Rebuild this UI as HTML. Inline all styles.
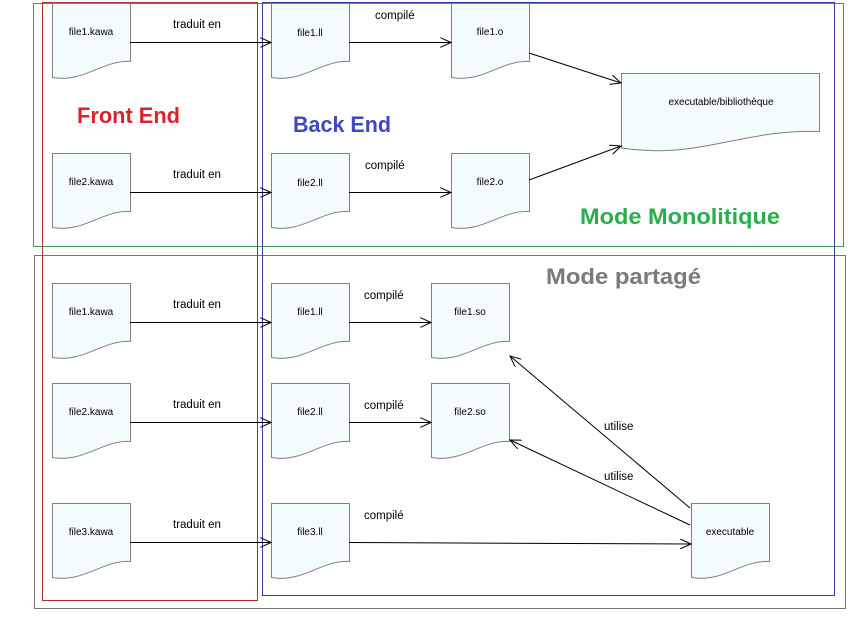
<!DOCTYPE html>
<html><head><meta charset="utf-8"><style>
html,body{margin:0;padding:0;background:#fff;width:860px;height:625px;overflow:hidden}
svg{display:block}
text{font-family:"Liberation Sans",sans-serif}
.d{fill:#f4fbfd;stroke:#7f7f7f;stroke-width:1}
.t{font-size:10px;fill:#000;text-anchor:middle}
.l{font-size:11.5px;fill:#000}
.a{stroke:#000;stroke-width:1;fill:none}
.big{font-size:22px;font-weight:bold}
</style></head><body>
<svg width="860" height="625" viewBox="0 0 860 625">
<defs>
<g id="doc"><path class="d" d="M0.5,0.5 H78.5 V58.5 C50,57 32,80 0.5,74.5 Z"/></g>
<marker id="ar" markerWidth="12" markerHeight="10" refX="11" refY="5" orient="auto" markerUnits="userSpaceOnUse"><path d="M0,0 L11,5 L0,10" fill="none" stroke="#000" stroke-width="1"/></marker>
</defs>
<rect x="33.5" y="3.5" width="810" height="243" fill="none" stroke="#3a9a50"/>
<rect x="34.5" y="255.5" width="811" height="353" fill="none" stroke="#777"/>
<rect x="42.5" y="2.5" width="215" height="598" fill="none" stroke="#b03030"/>
<rect x="262.5" y="2.5" width="572" height="593" fill="none" stroke="#3a3a9a"/>

<text x="77" y="123" class="big" fill="#d9232e" textLength="103" lengthAdjust="spacingAndGlyphs">Front End</text>
<text x="293" y="132" class="big" fill="#3f48bf" textLength="98" lengthAdjust="spacingAndGlyphs">Back End</text>
<text x="580" y="224" class="big" fill="#2aae4c" textLength="200" lengthAdjust="spacingAndGlyphs">Mode Monolitique</text>
<text x="546" y="284" class="big" fill="#7a7a7a" textLength="155" lengthAdjust="spacingAndGlyphs">Mode partagé</text>

<use href="#doc" x="52" y="3"/><text class="t" x="91" y="35">file1.kawa</text>
<use href="#doc" x="271" y="3"/><text class="t" x="310" y="36">file1.ll</text>
<use href="#doc" x="451" y="3"/><text class="t" x="490" y="35">file1.o</text>
<use href="#doc" x="52" y="153"/><text class="t" x="91" y="185">file2.kawa</text>
<use href="#doc" x="271" y="153"/><text class="t" x="310" y="186">file2.ll</text>
<use href="#doc" x="451" y="153"/><text class="t" x="490" y="185">file2.o</text>
<path class="d" d="M621.5,73.5 H819.5 V131.5 C740,129 700,160 621.5,148 Z"/>
<text class="t" x="721" y="105">executable/bibliothèque</text>

<use href="#doc" x="52" y="283"/><text class="t" x="91" y="315">file1.kawa</text>
<use href="#doc" x="271" y="283"/><text class="t" x="310" y="315">file1.ll</text>
<use href="#doc" x="431" y="283"/><text class="t" x="470" y="315">file1.so</text>
<use href="#doc" x="52" y="383"/><text class="t" x="91" y="415">file2.kawa</text>
<use href="#doc" x="271" y="383"/><text class="t" x="310" y="415">file2.ll</text>
<use href="#doc" x="431" y="383"/><text class="t" x="470" y="415">file2.so</text>
<use href="#doc" x="52" y="503"/><text class="t" x="91" y="535">file3.kawa</text>
<use href="#doc" x="271" y="503"/><text class="t" x="310" y="535">file3.ll</text>
<use href="#doc" x="691" y="503"/><text class="t" x="730" y="535">executable</text>

<g class="a" marker-end="url(#ar)">
<path d="M130,42.5 H271"/><path d="M349,42.5 H451"/>
<path d="M130,192.5 H271"/><path d="M349,192.5 H451"/>
<path d="M529,53 L621,83"/><path d="M529,180 L621,146"/>
<path d="M130,322.5 H271"/><path d="M349,322.5 H431"/>
<path d="M130,422.5 H271"/><path d="M349,422.5 H431"/>
<path d="M130,542.5 H271"/><path d="M349,542.5 L691,544"/>
<path d="M690,508 L510,356"/><path d="M690,525 L510,440"/>
</g>
<text class="l" x="173" y="28">traduit en</text>
<text class="l" x="173" y="178">traduit en</text>
<text class="l" x="173" y="308">traduit en</text>
<text class="l" x="173" y="408">traduit en</text>
<text class="l" x="173" y="528">traduit en</text>
<text class="l" x="375" y="19">compilé</text>
<text class="l" x="365" y="169">compilé</text>
<text class="l" x="364" y="299">compilé</text>
<text class="l" x="364" y="409">compilé</text>
<text class="l" x="364" y="519">compilé</text>
<text class="l" x="604" y="430">utilise</text>
<text class="l" x="604" y="480">utilise</text>
</svg>
</body></html>
